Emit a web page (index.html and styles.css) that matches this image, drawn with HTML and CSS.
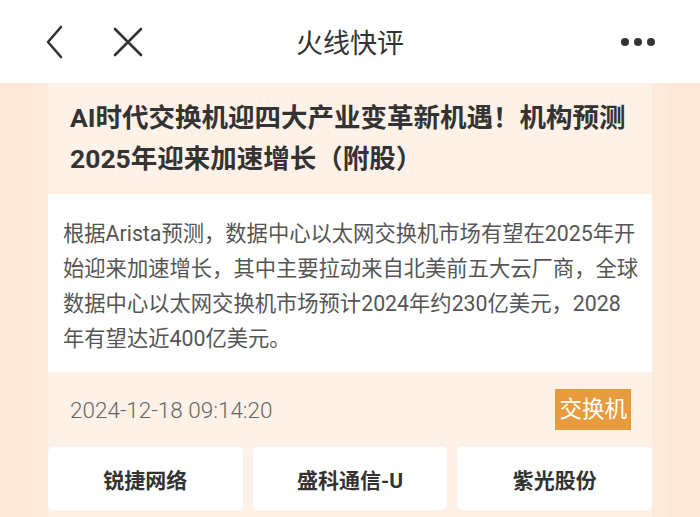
FILE: index.html
```html
<!DOCTYPE html>
<html lang="zh-CN">
<head>
  <meta charset="UTF-8">
  <title>火线快评</title>
  <meta name="viewport" content="width=device-width, initial-scale=1">
  <link rel="stylesheet" href="styles.css">
</head>
<body>

  <header class="topbar">
    <div class="nav-left">
      <svg class="icon" width="20" height="34" viewBox="0 0 20 34">
        <path d="M16 2 L3 17 L16 32" fill="none" stroke="#333" stroke-width="2.6" stroke-linecap="round" stroke-linejoin="round"/>
      </svg>
      <svg class="icon" width="32" height="32" viewBox="0 0 32 32">
        <path d="M3 3 L29 29 M29 3 L3 29" fill="none" stroke="#333" stroke-width="2.6" stroke-linecap="round"/>
      </svg>
    </div>
    <h1>火线快评</h1>
    <div class="more">
      <span></span><span></span><span></span>
    </div>
  </header>

  <main class="page">
    <article class="card">
      <h2 class="card-title">AI时代交换机迎四大产业变革新机遇！机构预测2025年迎来加速增长（附股）</h2>

      <div class="card-body">
        根据Arista预测，数据中心以太网交换机市场有望在2025年开始迎来加速增长，其中主要拉动来自北美前五大云厂商，全球数据中心以太网交换机市场预计2024年约230亿美元，2028年有望达近400亿美元。
      </div>

      <div class="card-meta">
        <span class="time">2024-12-18 09:14:20</span>
        <span class="tag">交换机</span>
      </div>

      <div class="stocks">
        <div class="stock">锐捷网络</div>
        <div class="stock">盛科通信-U</div>
        <div class="stock">紫光股份</div>
      </div>
    </article>
  </main>

</body>
</html>
```

FILE: styles.css
```css
body {
  margin: 0;
  height: 517px;
  overflow: hidden;
  font-family: Roboto, "Noto Sans CJK SC", sans-serif;
  background: #fbe8d6;
}

.topbar {
  height: 83px;
  background: #fff;
  display: flex;
  align-items: center;
  justify-content: space-between;
  padding: 0 45px 0 45px;
  position: relative;
}

.nav-left {
  display: flex;
  align-items: center;
  gap: 47px;
}

.icon {
  display: block;
}

.topbar h1 {
  position: absolute;
  left: 0;
  right: 0;
  margin: 0;
  text-align: center;
  font-size: 27px;
  font-weight: normal;
  color: #333;
  pointer-events: none;
}

.more {
  display: flex;
  gap: 5px;
}

.more span {
  width: 8px;
  height: 8px;
  border-radius: 50%;
  background: #333;
}

.page {
  padding: 0 33px;
}

.card {
  background: #fdf1e8;
  box-shadow: 0 0 0 15px #fcebdb;
  margin: 0 15px;
  min-height: 434px;
}

.card-title {
  margin: 0;
  padding: 14px 10px 15px 22px;
  font-size: 26.5px;
  line-height: 41px;
  font-weight: bold;
  color: #333;
}

.card-body {
  background: #fff;
  padding: 22px 12px 16px 15px;
  font-size: 21.3px;
  line-height: 35px;
  color: #555;
}

.card-meta {
  display: flex;
  align-items: center;
  justify-content: space-between;
  height: 75px;
  padding: 0 21px 0 22px;
}

.time {
  font-size: 22.5px;
  color: #666;
  font-weight: 300;
}

.tag {
  background: #e69c3c;
  color: #fff;
  font-size: 22.5px;
  line-height: 41px;
  padding: 0 4px;
}

.stocks {
  display: grid;
  grid-template-columns: repeat(3, 1fr);
  gap: 10px;
}

.stock {
  background: #fff;
  border-radius: 5px;
  height: 63px;
  display: flex;
  align-items: center;
  justify-content: center;
  font-size: 21px;
  font-weight: bold;
  color: #333;
}
```
